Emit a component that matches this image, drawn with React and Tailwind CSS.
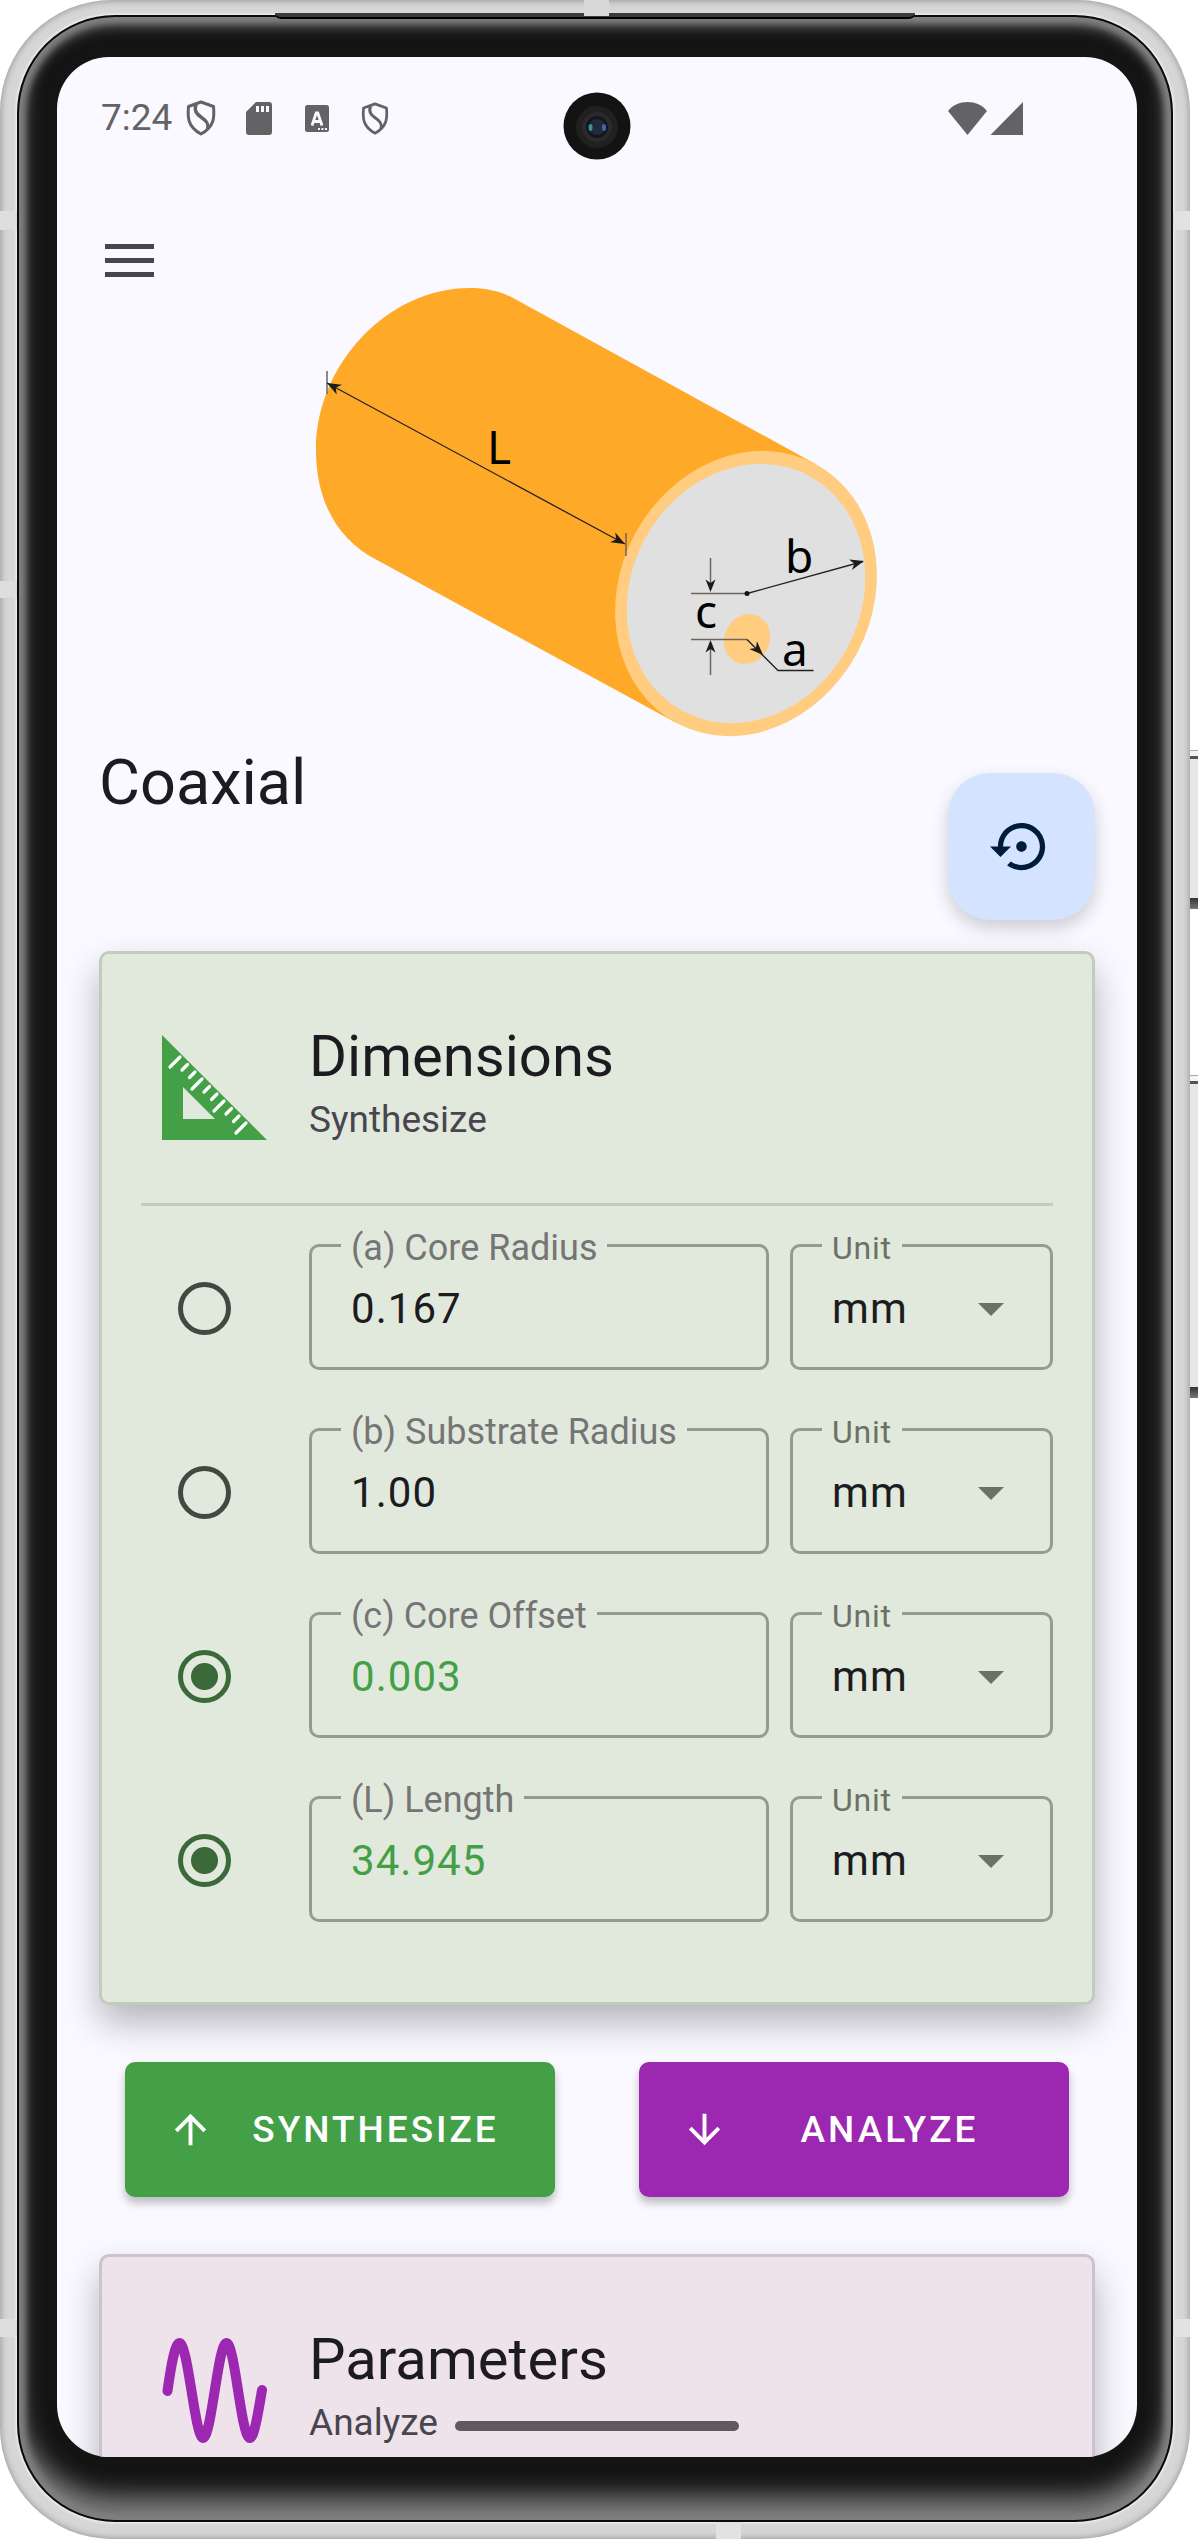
import React from "react";

const ROWS = [
  { id: "a", label: "(a) Core Radius", value: "0.167", picked: false },
  { id: "b", label: "(b) Substrate Radius", value: "1.00", picked: false },
  { id: "c", label: "(c) Core Offset", value: "0.003", picked: true },
  { id: "l", label: "(L) Length", value: "34.945", picked: true },
];

function Shield({ className }) {
  return (
    <svg viewBox="0 0 30 36" className={className} fill="none" stroke="currentColor" strokeWidth="3" strokeLinejoin="round" aria-hidden="true">
      <path d="M15 2 L27.500 6.500 C28.500 17 28.500 27 15 34 C1.500 27 1.500 17 2.500 6.500 Z" />
      <path d="M10 4.500 C8 11 10.500 14 15.500 17.500 C21 21 23 24 21.500 29" strokeWidth="3.400" />
    </svg>
  );
}

function StatusBar() {
  return (
    <header className="relative flex h-[136px] items-center px-11 pb-3.5 text-[#636366]">
      <time className="text-[37px] leading-[44px]">7:24</time>
      <div className="flex flex-1 items-center pl-[14px]">
        <Shield className="h-9 w-[30px]" />
        <svg viewBox="0 0 26 33" className="ml-[30px] h-[33px] w-[26px]" aria-hidden="true">
          <path fill="currentColor" d="M10 0H23a3 3 0 0 1 3 3V30a3 3 0 0 1-3 3H3a3 3 0 0 1-3-3V10Z" />
          <path stroke="#faf9ff" strokeWidth="3" d="M11.500 4v6M16.500 4v6M21.500 4v6" />
        </svg>
        <svg viewBox="0 0 24 27" className="ml-[33px] h-[27px] w-6" aria-hidden="true">
          <rect width="24" height="27" rx="2.500" fill="currentColor" />
          <path fill="none" stroke="#faf9ff" strokeWidth="2.800" d="M7 20.500 11.200 8h1.600L17 20.500M8.500 16.500h7" />
          <path stroke="#faf9ff" strokeWidth="2" d="M13 24h2M16.500 24h2M20 24h2" />
        </svg>
        <Shield className="ml-8 h-[33px] w-7" />
      </div>
      <svg viewBox="0 0 75 33" className="mr-[70px] h-[33px] w-[75px]" fill="currentColor" aria-hidden="true">
        <path d="M19.500 33 0 9C9-3 30-3 39 9Z" />
        <path d="M75 0V33H42.500Z" />
      </svg>
      <svg viewBox="0 0 68 68" className="absolute left-1/2 top-[35px] h-[68px] w-[68px] -translate-x-1/2" aria-hidden="true">
        <circle cx="34" cy="34" r="33.500" fill="#131313" />
        <circle cx="34" cy="35" r="21" fill="#202020" />
        <circle cx="34" cy="35" r="15" fill="#2a2a2b" />
        <circle cx="34" cy="35" r="11" fill="#141619" />
        <circle cx="34" cy="35" r="8" fill="#1f2b3a" />
        <ellipse cx="27.500" cy="35.500" rx="2" ry="3.500" fill="#3f8f93" />
        <ellipse cx="41" cy="35.500" rx="2" ry="3.500" fill="#4566b0" />
      </svg>
    </header>
  );
}

const HEAD = "M0 0 -14 -5.500 -10 0 -14 5.500Z";

function CoaxDiagram() {
  return (
    <svg viewBox="310 280 575 464" className="h-[464px] w-[575px]" role="img" aria-label="Coaxial line with dimensions L, a, b and c">
      <path
        fill="#ffa929"
        d="M470 288C486 288 500 291 515 299L815.500 464 676.500 723 377 560C338 540 316 502 316 450C316 364 388 288 470 288Z"
      />
      <ellipse cx="746" cy="593.500" rx="147" ry="126" transform="rotate(-62 746 593.500)" fill="#ffcc80" />
      <ellipse cx="746" cy="593.500" rx="133.500" ry="115" transform="rotate(-62 746 593.500)" fill="#e0e0e0" />
      <ellipse cx="747" cy="639" rx="25.500" ry="22.500" transform="rotate(-62 747 639)" fill="#ffcc80" />
      <g stroke="#6b675f" strokeWidth="1.500" fill="none">
        <path d="M327 371V394M626 533V556" />
        <path d="M691 593.500H747M691 639.500H747M710.500 558V585M710.500 675V648" />
      </g>
      <g stroke="#222" strokeWidth="1.300" fill="none">
        <path d="M327 383 625 544M747 593.500 863 561.500M747 639.500 778 670.500H813.500" />
      </g>
      <circle cx="747" cy="593.500" r="2.500" fill="#111" />
      <g fill="#1c1c1c">
        <path d={HEAD} transform="translate(327 383) rotate(208.400)" />
        <path d={HEAD} transform="translate(625 544) rotate(28.400)" />
        <path d={HEAD} transform="translate(864 561) rotate(-15.400)" />
        <path d={HEAD} transform="translate(763 655) rotate(45)" />
        <path d={HEAD} transform="translate(710.500 592) rotate(90) scale(.9)" />
        <path d={HEAD} transform="translate(710.500 640) rotate(-90) scale(.9)" />
      </g>
      <g fill="#000" fontSize="46" fontFamily="'Noto Sans', 'Open Sans', sans-serif">
        <text x="487" y="464">L</text>
        <text x="785" y="573">b</text>
        <text x="695" y="628">c</text>
        <text x="782" y="666">a</text>
      </g>
    </svg>
  );
}

function SetSquare() {
  return (
    <svg viewBox="0 0 105 105" className="h-[105px] w-[105px]" aria-hidden="true">
      <path fill="#43a047" fillRule="evenodd" d="M0 0 105 105H0ZM21 52V84H53Z" />
      <path
        stroke="#fff"
        strokeWidth="3.200"
        strokeLinecap="round"
        d="M18 22 8 32M25.500 29.500l-5.500 5.500M33 37l-5.500 5.500M40 44 30 54M47.500 51.500l-5.500 5.500M55 59l-5.500 5.500M62 66 52 76M69.500 73.500l-5.500 5.500M77 81l-5.500 5.500M84 88 74 98"
      />
    </svg>
  );
}

function Wave() {
  return (
    <svg viewBox="0 0 105 105" className="h-[105px] w-[105px]" aria-hidden="true">
      <path
        fill="none"
        stroke="#9c27b0"
        strokeWidth="10"
        strokeLinecap="round"
        d="M5.500 53C9 28 13 5 17.500 5C26 5 33 100 41 100C49.500 100 56 5 64.500 5C73 5 79 100 88 100C92 100 96 76 100 52"
      />
    </svg>
  );
}

function CardHead({ icon, title, sub }) {
  return (
    <div className="flex items-center px-[21px] pt-[65px]">
      <div className="flex w-[147px] shrink-0 pt-[10px]">{icon}</div>
      <div>
        <h2 className="text-[58px] leading-[75px]">{title}</h2>
        <p className="text-[37px] leading-[52px] text-[#49454f]">{sub}</p>
      </div>
    </div>
  );
}

function Row({ id, label, value, picked }) {
  return (
    <div className="flex items-start">
      <div className="flex w-[168px] shrink-0 justify-start pl-[37px] pt-[53px]">
        <input
          type="radio"
          name={"solve-" + id}
          aria-label={"Solve for " + label}
          defaultChecked={picked}
          className="h-[53px] w-[53px] appearance-none rounded-full border-[5px] border-[#434941] checked:border-[#3b6939] checked:bg-[radial-gradient(circle,#3b6939_13px,transparent_14px)]"
        />
      </div>
      <fieldset className="mr-[21px] h-[141px] min-w-0 flex-1 rounded-[10px] border-[3px] border-[#959b90] pl-[29px]">
        <legend className="px-[10px] pt-[6px] text-[36px] leading-[26px] text-[#757575]">
          <label htmlFor={"val-" + id}>{label}</label>
        </legend>
        <input
          id={"val-" + id}
          defaultValue={value}
          className={
            "mt-[15px] block h-[64px] w-full bg-transparent pl-[10px] text-[42px] tracking-wide outline-none " +
            (picked ? "text-[#43a047]" : "text-[#1c1b1f]")
          }
        />
      </fieldset>
      <fieldset className="relative h-[141px] w-[263px] shrink-0 rounded-[10px] border-[3px] border-[#959b90] pl-[29px]">
        <legend className="px-[10px] pt-[6px] text-[32px] leading-[26px] tracking-wide text-[#6b7167]">
          <label htmlFor={"unit-" + id}>Unit</label>
        </legend>
        <select
          id={"unit-" + id}
          defaultValue="mm"
          className="mt-[15px] block h-[64px] w-full appearance-none bg-transparent pl-[10px] text-[42px] tracking-wide text-[#1c1b1f] outline-none"
        >
          <option value="mm">mm</option>
        </select>
        <svg viewBox="0 0 26 13" className="pointer-events-none absolute right-[46px] top-[42px] h-[13px] w-[26px]" aria-hidden="true">
          <path fill="#6b7167" d="M0 0H26L13 13Z" />
        </svg>
      </fieldset>
    </div>
  );
}

function Action({ dir, children, className }) {
  return (
    <button type="button" className={"flex h-[135px] flex-1 items-center rounded-[10px] px-[42px] text-[37px] font-medium tracking-[3px] text-white shadow-[0_6px_8px_rgba(0,0,0,0.25)] " + className}>
      <svg viewBox="0 0 24 24" className="h-[47px] w-[47px] shrink-0" fill="currentColor" aria-hidden="true">
        {dir === "up" ? (
          <path d="m4 12 1.410 1.410L11 7.830V20h2V7.830l5.580 5.590L20 12l-8-8z" />
        ) : (
          <path d="m20 12-1.410-1.410L13 16.170V4h-2v12.170l-5.580-5.590L4 12l8 8z" />
        )}
      </svg>
      <span className="flex-1 pl-[24px] text-center">{children}</span>
    </button>
  );
}

function Screen() {
  return (
    <div className="relative h-full overflow-hidden rounded-[52px] bg-[#faf9ff] text-[#1c1b1f]">
      <StatusBar />
      <main>
        <div className="flex items-start">
          <button type="button" aria-label="Open menu" className="ml-12 mt-[51px] flex w-[49px] flex-col gap-[9px]">
            <span className="h-[5px] w-full bg-[#47464f]" />
            <span className="h-[5px] w-full bg-[#47464f]" />
            <span className="h-[5px] w-full bg-[#47464f]" />
          </button>
        </div>
        <div className="flex justify-center pt-[3px]">
          <CoaxDiagram />
        </div>
        <div className="flex justify-between px-[42px]">
          <h1 className="text-[63px] leading-[78px]">Coaxial</h1>
          <button type="button" aria-label="Reset" className="mt-[29px] flex h-[147px] w-[147px] items-center justify-center rounded-[42px] bg-[#d4e3ff] text-[#001c3a] shadow-[0_8px_18px_rgba(0,0,0,0.18)]">
            <svg viewBox="0 0 24 24" className="h-[63px] w-[63px]" fill="currentColor" aria-hidden="true">
              <path d="M14 12c0-1.100-.9-2-2-2s-2 .9-2 2 .9 2 2 2 2-.9 2-2zm-2-9c-4.970 0-9 4.030-9 9H0l4 4 4-4H5c0-3.870 3.130-7 7-7s7 3.130 7 7-3.130 7-7 7c-1.510 0-2.910-.49-4.060-1.300l-1.420 1.440C8.040 20.300 9.940 21 12 21c4.970 0 9-4.030 9-9s-4.030-9-9-9z" />
            </svg>
          </button>
        </div>
        <section className="mx-[42px] mt-[31px] rounded-[10px] border-[3px] border-[#c3cbbd] bg-[#e1e9dd] px-[39px] pb-[80px] shadow-[0_18px_36px_rgba(0,0,0,0.28)]">
          <CardHead icon={<SetSquare />} title="Dimensions" sub="Synthesize" />
          <hr className="mb-[23px] mt-[57px] border-t-[3px] border-[#c3cbbe]" />
          <div className="flex flex-col gap-[43px]">
            {ROWS.map((r) => (
              <Row key={r.id} {...r} />
            ))}
          </div>
        </section>
        <div className="mx-[68px] mt-[57px] flex gap-[84px]">
          <Action dir="up" className="bg-[#43a047]">SYNTHESIZE</Action>
          <Action dir="down" className="bg-[#9c27b0]">ANALYZE</Action>
        </div>
        <section className="mx-[42px] mt-[57px] rounded-[10px] border-[3px] border-[#cfc2ca] bg-[#eee3ea] px-[39px] pb-[80px] shadow-[0_18px_36px_rgba(0,0,0,0.28)]">
          <CardHead icon={<Wave />} title="Parameters" sub="Analyze" />
        </section>
      </main>
      <div className="absolute bottom-[26px] left-1/2 h-[10px] w-[284px] -translate-x-1/2 rounded-full bg-[#5f5a5f]" />
    </div>
  );
}

const SIDE_KEY =
  "absolute right-0 w-[8px] border-t border-t-[#aaa] bg-[linear-gradient(to_bottom,#f4f4f4_5px,#555_5px,#555_8px,#e6e6e6_8px,#e6e6e6_calc(100%_-_11px),#333_calc(100%_-_11px),#777_100%)] ";

export default function App() {
  return (
    <div className="relative h-screen bg-white pr-2 font-[Roboto,sans-serif]">
      <div className={SIDE_KEY + "top-[750px] h-[159px]"} />
      <div className={SIDE_KEY + "top-[1075px] h-[323px]"} />
      <div className="relative h-full overflow-hidden rounded-[112px] bg-[#d6d6d6] px-[17px] pb-[17px] pt-[15px] shadow-[inset_0_0_6px_1px_#999]">
        <div className="absolute left-0 top-[211px] h-[19px] w-[17px] bg-[#dedede]" />
        <div className="absolute left-0 top-[581px] h-[17px] w-[17px] bg-[#dedede]" />
        <div className="absolute right-0 top-[211px] h-[19px] w-[17px] bg-[#e2e2e2]" />
        <div className="absolute bottom-[202px] left-0 h-[18px] w-[17px] bg-[#dedede]" />
        <div className="absolute bottom-[202px] right-0 h-[18px] w-[17px] bg-[#e2e2e2]" />
        <div className="absolute bottom-0 left-[716px] h-[17px] w-[25px] bg-[#e2e2e2]" />
        <div className="h-full rounded-[98px] border-2 border-[#0c0c0c] bg-[#141414] px-[38px] pb-[63px] pr-[34px] pt-[40px] shadow-[0_0_3px_1px_#f7f7f7,inset_0_0_6px_6px_#808080,inset_0_7px_14px_2px_#666,inset_0_-24px_24px_0_#7c7c7c]">
          <Screen />
        </div>
        <div className="absolute left-1/2 top-[13px] h-[6px] w-[640px] -translate-x-1/2 rounded-b-md border-b-2 border-black bg-[#3c3c3c]" />
        <div className="absolute left-[584px] top-0 h-4 w-[25px] bg-[#d8d8d8]" />
      </div>
    </div>
  );
}
